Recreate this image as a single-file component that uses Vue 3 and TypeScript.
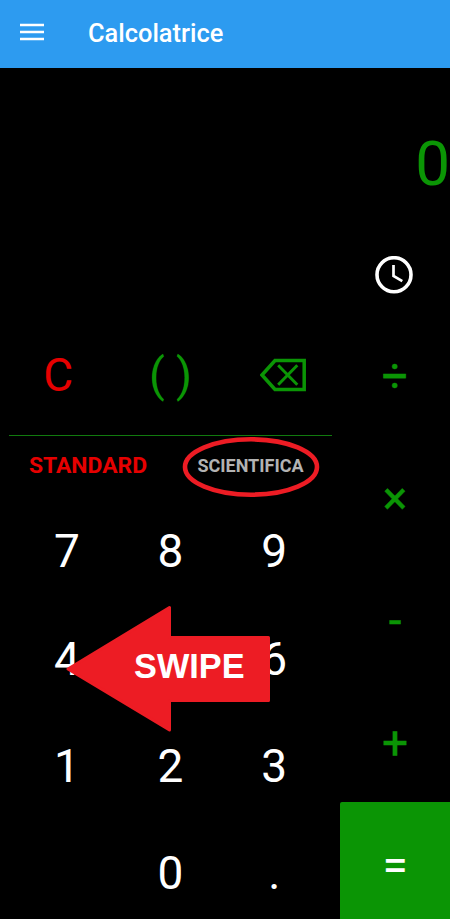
<script setup lang="ts">
interface Operator {
  symbol: string
  label: string
  kind: string
}

// The centre key of the second row stays blank beneath the swipe arrow.
const digits: string[] = ['7', '8', '9', '4', '', '6', '1', '2', '3', '', '0', '.']

const operators: Operator[] = [
  { symbol: '÷', label: 'Diviso', kind: 'divide' },
  { symbol: '×', label: 'Per', kind: 'times' },
  { symbol: '-', label: 'Meno', kind: 'minus' },
  { symbol: '+', label: 'Più', kind: 'plus' },
  { symbol: '=', label: 'Uguale', kind: 'equals' },
]
</script>

<template>
  <div class="screen">
    <header class="bar">
      <svg class="menu" viewBox="0 0 24 18" aria-hidden="true">
        <path d="M0 2H24M0 9H24M0 16H24" />
      </svg>
      <h1 class="title">Calcolatrice</h1>
    </header>

    <div class="display">0</div>

    <div class="history">
      <svg class="clock" viewBox="0 0 38 38" aria-hidden="true">
        <circle cx="19" cy="18.7" r="17" />
        <path d="M18.5 9V20L27.3 25.2" />
      </svg>
    </div>

    <main class="pad">
      <section class="left">
        <div class="functions">
          <button class="key clear">C</button>
          <button class="key paren">( )</button>
          <button class="key erase" aria-label="Cancella">
            <svg viewBox="0 0 46 34" aria-hidden="true">
              <path class="outline" d="M2 17L15 2.5H44.2V31.5H15Z" />
              <path class="cross" d="M18.2 7.3L37.3 26.7M37.3 7.3L18.2 26.7" />
            </svg>
          </button>
        </div>
        <div class="tabs">
          <span class="tab standard">STANDARD</span>
          <span class="tab scientific">
            SCIENTIFICA
            <svg class="ring" viewBox="0 0 138 62" aria-hidden="true">
              <ellipse cx="69" cy="31" rx="66" ry="27.7" />
            </svg>
          </span>
        </div>
        <div class="digits">
          <button v-for="(d, i) in digits" :key="i" class="key">{{ d }}</button>
          <div class="swipe">
            <svg class="arrow" viewBox="0 0 206 128" aria-hidden="true">
              <path d="M3 64L104.5 2.5V32.5H203.5V95.5H104.5V125Z" />
            </svg>
            <span class="swipe-text">SWIPE</span>
          </div>
        </div>
      </section>

      <aside class="operators">
        <button
          v-for="op in operators"
          :key="op.kind"
          class="op"
          :class="op.kind"
          :aria-label="op.label"
        >
          {{ op.symbol }}
        </button>
      </aside>
    </main>
  </div>
</template>

<style>
body {
  margin: 0;
  background: #000;
  overflow: hidden;
}
</style>

<style scoped>
.screen {
  width: 450px;
  height: 919px;
  overflow: hidden;
  display: flex;
  flex-direction: column;
  background: #000;
  font-family: Roboto, 'Liberation Sans', sans-serif;
}

.bar {
  flex: none;
  height: 68px;
  box-sizing: border-box;
  display: flex;
  align-items: center;
  gap: 44px;
  padding: 0 20px 5px;
  background: #2d9bf0;
}

.menu {
  width: 24px;
  height: 18px;
  fill: none;
  stroke: #fff;
  stroke-width: 2.6;
}

.title {
  margin: 0;
  padding-top: 2px;
  color: #fff;
  font-size: 25.4px;
  font-weight: 500;
  line-height: 30px;
}

.display {
  flex: none;
  height: 168px;
  box-sizing: border-box;
  padding-top: 12px;
  line-height: 168px;
  text-align: right;
  color: #0b9505;
  font-size: 62px;
}

.history {
  flex: none;
  height: 77px;
  display: flex;
  align-items: center;
  justify-content: flex-end;
  padding-right: 37px;
}

.clock {
  width: 38px;
  height: 38px;
  fill: none;
  stroke: #fff;
}

.clock circle {
  stroke-width: 3.6;
}

.clock path {
  stroke-width: 2.7;
}

.pad {
  flex: none;
  display: grid;
  grid-template-columns: 340px 110px;
  height: 614px;
}

.left {
  display: flex;
  flex-direction: column;
}

button {
  margin: 0;
  padding: 0;
  border: 0;
  background: none;
  font-family: inherit;
}

.functions {
  height: 123px;
  box-sizing: border-box;
  padding: 2px 8px 0 6px;
  margin: 0 8px 0 9px;
  border-bottom: 1px solid #117a0e;
  display: grid;
  grid-template-columns: repeat(3, 103.7px);
}

.key {
  display: flex;
  align-items: center;
  justify-content: center;
  color: #fff;
  font-size: 46px;
  line-height: 54px;
}

.clear {
  padding-right: 17px;
  color: #e60000;
}

.paren {
  color: #0b9505;
}

.erase svg {
  width: 46px;
  height: 34px;
  margin-left: 18px;
  fill: none;
  stroke: #0b9505;
}

.outline {
  stroke-width: 3.5;
}

.cross {
  stroke-width: 3;
}

.tabs {
  height: 61.7px;
  box-sizing: border-box;
  display: grid;
  grid-template-columns: 158px 167px;
  padding: 0 0 2.7px 9px;
}

.tab {
  position: relative;
  display: flex;
  align-items: center;
  justify-content: center;
  font-weight: 700;
}

.standard {
  color: #e60000;
  font-size: 22.9px;
}

.scientific {
  color: #b3b3b3;
  font-size: 18px;
}

.ring {
  position: absolute;
  left: 14.5px;
  top: 0;
  width: 138px;
  height: 62px;
  fill: none;
  stroke: #ed1c24;
  stroke-width: 4.6;
}

.digits {
  position: relative;
  flex: 1;
  display: grid;
  grid-template-columns: repeat(3, 103.7px);
  grid-template-rows: repeat(4, 107.3px);
  padding-left: 15px;
}

.swipe {
  position: absolute;
  left: 65px;
  top: 107.3px;
  width: 206px;
  height: 128px;
}

.arrow {
  display: block;
  width: 206px;
  height: 128px;
  fill: #ed1c24;
  stroke: #ed1c24;
  stroke-width: 3;
  stroke-linejoin: round;
}

.swipe-text {
  position: absolute;
  left: 69px;
  top: 41px;
  color: #fff;
  font-family: 'Liberation Sans', Arial, sans-serif;
  font-size: 34.3px;
  font-weight: 700;
  line-height: 40px;
}

.operators {
  display: grid;
  grid-template-rows: repeat(4, 122.3px) 124.8px;
}

.op {
  padding-top: 3px;
  color: #0b9505;
  font-size: 46px;
  line-height: 54px;
  -webkit-text-stroke: 0.4px #0b9505;
}

.equals {
  padding-top: 0;
  background: #0b9505;
  color: #fff;
  border-radius: 2px 0 0 0;
  -webkit-text-stroke: 0;
}
</style>
